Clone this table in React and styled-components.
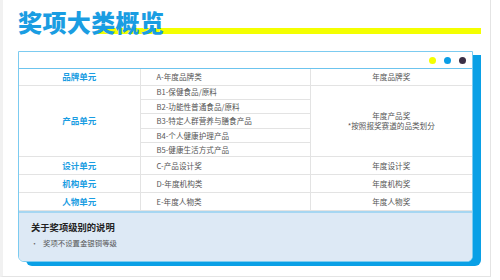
import React from 'react'
import styled, { createGlobalStyle } from 'styled-components'

const GlobalStyle = createGlobalStyle`
  html, body {
    margin: 0;
    padding: 0;
    background: #ffffff;
  }
  body {
    font-family: "Noto Sans CJK SC", "Noto Sans", sans-serif;
  }
`

const Slide = styled.div`
  box-sizing: border-box;
  width: 491px;
  height: 277px;
  padding: 8px 0 0 15px;
  background: #ffffff;
  border-left: 3px solid #f1f1f1;
  border-right: 1px solid #e4e4e4;
  border-bottom: 1px solid #e4e4e4;
`

const TitleRow = styled.div`
  position: relative;
  height: 28px;

  &::before {
    content: '';
    position: absolute;
    left: 80px;
    top: 20px;
    width: 383px;
    height: 6px;
    background: #f4ff00;
  }
`

const Title = styled.h1`
  position: relative;
  z-index: 1;
  margin: 0;
  font-size: 24px;
  line-height: 28px;
  font-weight: 900;
  color: #1a9de2;
  letter-spacing: 0.4px;
`

const Card = styled.div`
  box-sizing: border-box;
  width: 455px;
  margin-top: 15px;
  border: 1px solid #7ccbf0;
  border-radius: 0 0 6px 6px;
  background: #ffffff;
  box-shadow: 8px 4px 0 #0aa0e6;
  overflow: hidden;
`

const CardHead = styled.div`
  height: 16px;
  display: flex;
  align-items: center;
  justify-content: flex-end;
  gap: 8px;
  padding-right: 6px;
  border-bottom: 1px solid #6cc4ee;
`

const Dot = styled.span`
  width: 7px;
  height: 7px;
  border-radius: 50%;
  background: ${({ color }) => color};
`

const Table = styled.table`
  width: 100%;
  border-collapse: collapse;
  table-layout: fixed;
`

const Row = styled.tr`
  height: ${({ h }) => h}px;
`

const Cell = styled.td`
  padding: 0;
  border: 1px solid #e3e3e3;
  border-top: none;
  font-size: ${({ kind }) => (kind === 'unit' ? '8.5px' : '7.6px')};
  font-weight: ${({ kind }) => (kind === 'unit' ? 700 : 400)};
  color: ${({ kind }) => (kind === 'unit' ? '#1a9de2' : '#555555')};
  text-align: ${({ kind }) => (kind === 'item' ? 'left' : 'center')};
  padding-left: ${({ kind }) => (kind === 'item' ? '16px' : '0')};
  line-height: 9.5px;
  vertical-align: middle;
  white-space: nowrap;

  &:first-child {
    border-left: none;
  }
  &:last-child {
    border-right: none;
  }
`

const Note = styled.div`
  height: 50px;
  box-sizing: border-box;
  padding: 8px 12px 0 12px;
  background: #dde9f5;
  border-top: 2px solid #a6d6f1;
`

const NoteTitle = styled.div`
  font-size: 9.3px;
  line-height: 13px;
  font-weight: 700;
  color: #222222;
`

const NoteItem = styled.div`
  display: flex;
  align-items: center;
  gap: 5px;
  margin-top: 3px;
  font-size: 7.4px;
  color: #555555;

  &::before {
    content: '•';
    font-size: 7px;
    color: #666666;
  }
`

const products = [
  'B1-保健食品/原料',
  'B2-功能性普通食品/原料',
  'B3-特定人群营养与膳食产品',
  'B4-个人健康护理产品',
  'B5-健康生活方式产品',
]

const singles = [
  ['设计单元', 'C-产品设计奖', '年度设计奖'],
  ['机构单元', 'D-年度机构类', '年度机构奖'],
  ['人物单元', 'E-年度人物类', '年度人物奖'],
]

const App = () => {
  return (
    <>
      <GlobalStyle />
      <Slide>
        <TitleRow>
          <Title>奖项大类概览</Title>
        </TitleRow>
        <Card>
          <CardHead>
            <Dot color="#f4ff00" />
            <Dot color="#0a9ee6" />
            <Dot color="#3a2f45" />
          </CardHead>
          <Table>
            <colgroup>
              <col style={{ width: 121 }} />
              <col style={{ width: 170 }} />
              <col />
            </colgroup>
            <tbody>
              <Row h={16}>
                <Cell kind="unit">品牌单元</Cell>
                <Cell kind="item">A-年度品牌类</Cell>
                <Cell kind="award">年度品牌奖</Cell>
              </Row>
              {products.map((p, i) => (
                <Row h={14.4} key={p}>
                  {i === 0 && <Cell kind="unit" rowSpan={5}>产品单元</Cell>}
                  <Cell kind="item">{p}</Cell>
                  {i === 0 && (
                    <Cell kind="award" rowSpan={5}>
                      年度产品奖
                      <br />
                      *按照报奖赛道的品类划分
                    </Cell>
                  )}
                </Row>
              ))}
              {singles.map(([unit, item, award]) => (
                <Row h={18} key={unit}>
                  <Cell kind="unit">{unit}</Cell>
                  <Cell kind="item">{item}</Cell>
                  <Cell kind="award">{award}</Cell>
                </Row>
              ))}
            </tbody>
          </Table>
          <Note>
            <NoteTitle>关于奖项级别的说明</NoteTitle>
            <NoteItem>奖项不设置金银铜等级</NoteItem>
          </Note>
        </Card>
      </Slide>
    </>
  )
}

export default App
